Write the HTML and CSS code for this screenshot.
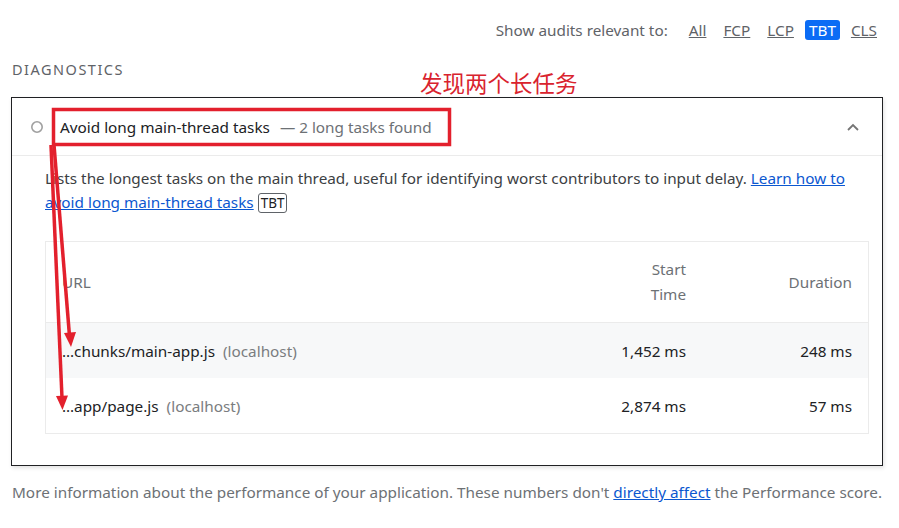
FILE: index.html
```html
<!DOCTYPE html>
<html lang="en">
<head>
<meta charset="utf-8">
<title>Diagnostics</title>
<link rel="stylesheet" href="styles.css">
</head>
<body>
<div class="page">
  <div class="filter">
    <span class="filter-label">Show audits relevant to:</span>
    <a class="chip" href="#">All</a>
    <a class="chip" href="#">FCP</a>
    <a class="chip" href="#">LCP</a>
    <span class="chip chip-active">TBT</span>
    <a class="chip" href="#">CLS</a>
  </div>
  <div class="group-title">DIAGNOSTICS</div>
  <div class="audit">
    <div class="audit-head">
      <svg class="audit-icon" width="14" height="14" viewBox="0 0 14 14"><circle cx="7" cy="7" r="5.2" fill="none" stroke="#a0a0a0" stroke-width="1.6"/></svg>
      <span class="audit-title">Avoid long main-thread tasks</span>
      <span class="audit-display">— 2 long tasks found</span>
      <svg class="chevron" width="14" height="10" viewBox="0 0 14 10"><path d="M2 8 L7 3 L12 8" fill="none" stroke="#757575" stroke-width="1.8"/></svg>
    </div>
    <div class="audit-body">
      <p class="desc">Lists the longest tasks on the main thread, useful for identifying worst contributors to input delay. <a href="#">Learn how to avoid long main-thread tasks</a> <span class="tag">TBT</span></p>
      <div class="table">
        <div class="row head">
          <div class="cell url">URL</div>
          <div class="cell num"><span class="wrap">Start Time</span></div>
          <div class="cell num">Duration</div>
        </div>
        <div class="row odd">
          <div class="cell url">…chunks/main-app.js<span class="host">(localhost)</span></div>
          <div class="cell num">1,452 ms</div>
          <div class="cell num">248 ms</div>
        </div>
        <div class="row">
          <div class="cell url">…app/page.js<span class="host">(localhost)</span></div>
          <div class="cell num">2,874 ms</div>
          <div class="cell num">57 ms</div>
        </div>
      </div>
    </div>
  </div>
  <p class="footnote">More information about the performance of your application. These numbers don't <a href="#">directly affect</a> the Performance score.</p>

  <div class="note">发现两个长任务</div>
  <svg class="marks" width="899" height="528" viewBox="0 0 899 528">
    <rect x="53.5" y="109.5" width="396" height="35" fill="none" stroke="#e3202d" stroke-width="3.5"/>
    <line x1="54" y1="145" x2="69.5" y2="336" stroke="#e3202d" stroke-width="3.5"/>
    <polygon points="71,347 64,333 76,332" fill="#e3202d"/>
    <line x1="51" y1="145" x2="62" y2="398" stroke="#e3202d" stroke-width="3.5"/>
    <polygon points="62.5,410 56,396 68,395.5" fill="#e3202d"/>
  </svg>
</div>
</body>
</html>
```
FILE: styles.css
```css
html, body {
  margin: 0;
  padding: 0;
  background: #fff;
}
.page {
  position: relative;
  width: 899px;
  height: 528px;
  overflow: hidden;
  font-family: "Noto Sans", "Open Sans", sans-serif;
  font-size: 15.3px;
  color: #202124;
}
a {
  color: #0b57d0;
}
.filter {
  display: flex;
  justify-content: flex-end;
  align-items: center;
  gap: 15px;
  height: 20px;
  padding: 20px 21px 0 0;
  color: #5f6368;
}
.filter-label {
  margin-right: 5px;
}
.chip {
  color: #5f6368;
  text-decoration: underline;
  padding: 0 1px;
}
.chip-active {
  background: #0b6cf5;
  color: #fff;
  text-decoration: none;
  border-radius: 3px;
  padding: 0 4px;
  margin: 0 -5px;
  line-height: 20px;
}
.group-title {
  margin: 20px 0 0 12px;
  letter-spacing: 1.5px;
  color: #5f6368;
  font-size: 14.5px;
  line-height: 18px;
}
.audit {
  margin: 19px 16px 0 11px;
  border: 1px solid #202124;
  box-shadow: 1px 2px 4px rgba(0,0,0,0.12);
}
.audit-head {
  display: flex;
  align-items: center;
  height: 57px;
  border-bottom: 1px solid #ebebeb;
  padding: 0 22px 0 18px;
}
.audit-icon {
  margin-right: 16px;
}
.audit-title {
  color: #202124;
}
.audit-display {
  color: #6d7175;
  margin-left: 10px;
}
.chevron {
  margin-left: auto;
}
.audit-body {
  padding: 10px 13px 31px 33px;
}
.desc {
  margin: 0;
  line-height: 24px;
  color: #3c4043;
}
.tag {
  border: 1px solid #5f6368;
  border-radius: 3px;
  padding: 0 2px;
  font-size: 13.5px;
  line-height: 16px;
  color: #202124;
}
.table {
  margin-top: 27px;
  border: 1px solid #ebebeb;
}
.row {
  display: grid;
  grid-template-columns: 1fr 120px 166px;
  align-items: center;
  height: 55px;
}
.row.head {
  height: 80px;
  border-bottom: 1px solid #ebebeb;
  color: #6d7175;
}
.row.odd {
  background: #f7f8f9;
}
.cell {
  padding: 0 16px;
}
.num {
  text-align: right;
}
.wrap {
  display: inline-block;
  width: min-content;
  line-height: 25px;
  text-align: right;
}
.host {
  color: #7a7d80;
  margin-left: 8px;
}
.footnote {
  margin: 16px 0 0 12px;
  color: #6d7175;
}
.note {
  position: absolute;
  left: 420px;
  top: 67px;
  font-family: "Noto Sans CJK SC", sans-serif;
  font-size: 22.5px;
  line-height: 30px;
  color: #d9232e;
}
.marks {
  position: absolute;
  left: 0;
  top: 0;
  pointer-events: none;
}
```
